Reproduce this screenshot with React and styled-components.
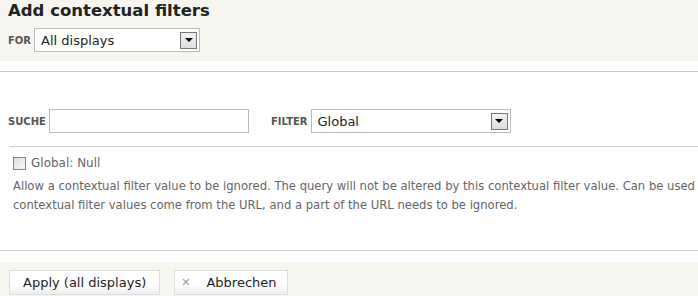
import React from 'react'
import styled, { createGlobalStyle } from 'styled-components'

const GlobalStyle = createGlobalStyle`
  html, body {
    margin: 0;
    padding: 0;
    background: #fff;
    font-family: "DejaVu Sans", Verdana, sans-serif;
    color: #333;
    overflow: hidden;
  }
`

const Header = styled.div`
  background: #f6f5f0;
  padding: 2px 8px 9px 8px;
  height: 50px;
`

const Title = styled.h2`
  margin: 0 0 8px 0;
  font-size: 16.5px;
  font-weight: bold;
  color: #222;
  line-height: 18px;
`

const Row = styled.div`
  display: flex;
  align-items: center;
  gap: ${p => p.gap || 3}px;
`

const Label = styled.span`
  font-size: 10px;
  font-weight: bold;
  text-transform: uppercase;
  color: #555;
  margin-left: ${p => p.offset || 0}px;
`

const Select = styled.div`
  box-sizing: border-box;
  width: ${p => p.width}px;
  height: 24px;
  border: 1px solid #bbb;
  background: #fff;
  display: flex;
  align-items: center;
  justify-content: space-between;
  padding: 0 2px 0 6px;
  font-size: 13px;
  color: #222;
`

const Arrow = styled.span`
  box-sizing: border-box;
  width: 17px;
  height: 17px;
  border: 1px solid #777;
  background: linear-gradient(#f4f4f4, #dcdcdc);
  display: flex;
  align-items: center;
  justify-content: center;
  &::after {
    content: '';
    border-left: 4px solid transparent;
    border-right: 4px solid transparent;
    border-top: 4px solid #000;
  }
`

const Divider = styled.hr`
  border: 0;
  border-top: 1px solid #ccc;
  margin: ${p => p.top || 0}px 0 0 ${p => p.left || 0}px;
`

const Body = styled.div`
  padding: 0;
`

const SearchRow = styled(Row)`
  padding: 37px 0 0 8px;
  height: 24px;
`

const TextInput = styled.div`
  box-sizing: border-box;
  width: 200px;
  height: 24px;
  border: 1px solid #bbb;
  background: #fff;
`

const Options = styled.div`
  padding: 9px 0 0 13px;
  font-size: 11.6px;
  color: #666;
  overflow: hidden;
`

const CheckRow = styled(Row)`
  gap: 5px;
  height: 14px;
  color: #666;
  font-size: 12px;
`

const Box = styled.span`
  box-sizing: border-box;
  width: 13px;
  height: 13px;
  border: 1px solid #888;
  background: linear-gradient(135deg, #dcdcdc, #fafafa);
`

const Desc = styled.p`
  margin: 7px 0 0 0;
  line-height: 19px;
  white-space: nowrap;
  color: #666;
`

const Footer = styled.div`
  margin-top: 11px;
  background: #f6f5f0;
  padding: 8px 9px 0 9px;
  height: 35px;
  display: flex;
  gap: 14px;
`

const Button = styled.button`
  box-sizing: border-box;
  height: 25px;
  padding: 0 ${p => p.pad || 13}px 0 ${p => p.padLeft || p.pad || 13}px;
  border: 1px solid #ddd;
  background: linear-gradient(#fff 60%, #eeeeee);
  font-family: inherit;
  font-size: 13px;
  color: #222;
  display: flex;
  align-items: center;
  gap: 16px;
`

const Cross = styled.span`
  color: #999;
  font-weight: bold;
  font-size: 11px;
`

export default function App() {
  return (
    <>
      <GlobalStyle />
      <Header>
        <Title>Add contextual filters</Title>
        <Row>
          <Label>For</Label>
          <Select width={166}>
            All displays
            <Arrow />
          </Select>
        </Row>
      </Header>
      <Divider top={10} />
      <Body>
        <SearchRow>
          <Label>Suche</Label>
          <TextInput />
          <Label offset={19}>Filter</Label>
          <Select width={200}>
            Global
            <Arrow />
          </Select>
        </SearchRow>
        <Divider top={13} left={9} />
        <Options>
          <CheckRow>
            <Box />
            Global: Null
          </CheckRow>
          <Desc>
            Allow a contextual filter value to be ignored. The query will not be altered by this contextual filter value. Can be used when
            <br />
            contextual filter values come from the URL, and a part of the URL needs to be ignored.
          </Desc>
        </Options>
        <Divider top={35} />
      </Body>
      <Footer>
        <Button>Apply (all displays)</Button>
        <Button pad={10} padLeft={6}>
          <Cross>✕</Cross>
          Abbrechen
        </Button>
      </Footer>
    </>
  )
}
